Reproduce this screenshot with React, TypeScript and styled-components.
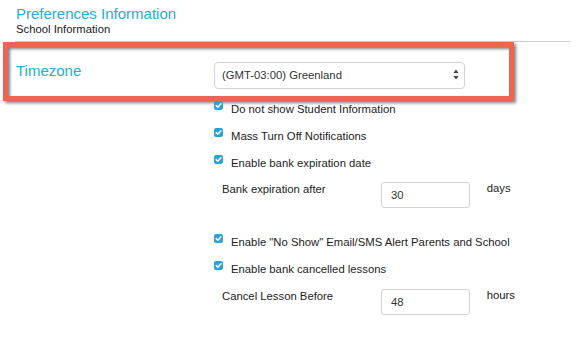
import { FC } from 'react'
import styled, { createGlobalStyle } from 'styled-components'

const GlobalStyle = createGlobalStyle`
  html, body {
    margin: 0;
    padding: 0;
    background: #fff;
  }
  body {
    font-family: 'Liberation Sans', Arial, Helvetica, sans-serif;
    color: #222;
    -webkit-font-smoothing: antialiased;
  }
`

const CheckIcon: FC = () => (
  <svg width="9" height="9" viewBox="0 0 9 9">
    <rect x="0" y="0" width="9" height="9" rx="2" fill="#2ba3d6" />
    <path d="M2.2 4.6 L3.8 6.2 L6.9 2.8" fill="none" stroke="#fff" strokeWidth="1.5" strokeLinecap="round" strokeLinejoin="round" />
  </svg>
)

const SelectArrows: FC = () => (
  <svg width="6" height="11" viewBox="0 0 6 11">
    <path d="M3 0.5 L5.6 4 L0.4 4 Z" fill="#444" />
    <path d="M3 10.5 L5.6 7 L0.4 7 Z" fill="#444" />
  </svg>
)

type CheckOption = { label: string; gap: number }

const topOptions: CheckOption[] = [
  { label: 'Do not show Student Information', gap: 0 },
  { label: 'Mass Turn Off Notifications', gap: 10.8 },
  { label: 'Enable bank expiration date', gap: 10.8 },
]

const bottomOptions: CheckOption[] = [
  { label: 'Enable "No Show" Email/SMS Alert Parents and School', gap: 26.5 },
  { label: 'Enable bank cancelled lessons', gap: 10.8 },
]

const App: FC = () => {
  return (
    <Page>
      <GlobalStyle />
      <Header>
        <Title>Preferences Information</Title>
        <Subtitle>School Information</Subtitle>
      </Header>
      <Divider />
      <Highlight>
        <TimezoneLabel>Timezone</TimezoneLabel>
        <SelectBox>
          <SelectText>(GMT-03:00) Greenland</SelectText>
          <SelectArrows />
        </SelectBox>
      </Highlight>
      <Options>
        {topOptions.map((o) => (
          <CheckRow key={o.label} $gap={o.gap}>
            <CheckIcon />
            <CheckLabel>{o.label}</CheckLabel>
          </CheckRow>
        ))}
        <FieldRow $gap={10.2}>
          <FieldLabel>Bank expiration after</FieldLabel>
          <NumberInput>30</NumberInput>
          <Unit>days</Unit>
        </FieldRow>
        {bottomOptions.map((o) => (
          <CheckRow key={o.label} $gap={o.gap}>
            <CheckIcon />
            <CheckLabel>{o.label}</CheckLabel>
          </CheckRow>
        ))}
        <FieldRow $gap={10.5}>
          <FieldLabel>Cancel Lesson Before</FieldLabel>
          <NumberInput>48</NumberInput>
          <Unit>hours</Unit>
        </FieldRow>
      </Options>
    </Page>
  )
}

const Page = styled.div`
  width: 584px;
  height: 344px;
  overflow: hidden;
  display: flex;
  flex-direction: column;
`

const Header = styled.div`
  display: flex;
  flex-direction: column;
  padding: 5px 0 0 16px;
`

const Title = styled.div`
  font-size: 15px;
  line-height: 17px;
  color: #26acd8;
`

const Subtitle = styled.div`
  font-size: 11.3px;
  line-height: 14px;
  color: #1c1c1c;
`

const Divider = styled.div`
  margin: 5px 0 0 15px;
  width: 556px;
  height: 1px;
  background: #cfcfcf;
`

const Highlight = styled.div`
  box-sizing: border-box;
  margin-left: 3px;
  width: 511px;
  height: 59px;
  border: 5px solid #ef6352;
  box-shadow: 2px 2px 3px rgba(0, 0, 0, 0.5), inset 2px 2px 3px rgba(0, 0, 0, 0.5);
  display: flex;
  align-items: flex-start;
  padding: 15px 0 0 8px;
`

const TimezoneLabel = styled.div`
  width: 198px;
  font-size: 15px;
  line-height: 17px;
  color: #26acd8;
`

const SelectBox = styled.div`
  box-sizing: border-box;
  width: 251px;
  height: 27px;
  border: 1px solid #d2d2d2;
  border-radius: 4px;
  display: flex;
  align-items: center;
  justify-content: space-between;
  padding: 0 5px 2px 7px;
  background: #fff;
`

const SelectText = styled.span`
  font-size: 11.3px;
  color: #333;
`

const Options = styled.div`
  display: flex;
  flex-direction: column;
  margin-left: 214px;
`

const CheckRow = styled.div<{ $gap: number }>`
  display: flex;
  align-items: flex-start;
  gap: 8px;
  margin-top: ${(p) => p.$gap}px;
  height: 16px;
`

const CheckLabel = styled.span`
  font-size: 11.3px;
  line-height: 16px;
  color: #1c1c1c;
`

const FieldRow = styled.div<{ $gap: number }>`
  display: flex;
  align-items: flex-start;
  margin-top: ${(p) => p.$gap}px;
  padding-left: 8px;
`

const FieldLabel = styled.span`
  width: 159px;
  font-size: 11.3px;
  line-height: 16px;
  color: #1c1c1c;
`

const NumberInput = styled.div`
  box-sizing: border-box;
  width: 89px;
  height: 26px;
  margin-top: 1.2px;
  border: 1px solid #d2d2d2;
  border-radius: 3px;
  padding: 0 0 0 9px;
  display: flex;
  align-items: center;
  font-size: 11.3px;
  color: #333;
`

const Unit = styled.span`
  margin-left: 16.7px;
  font-size: 11.3px;
  line-height: 15px;
  color: #1c1c1c;
`

export default App
